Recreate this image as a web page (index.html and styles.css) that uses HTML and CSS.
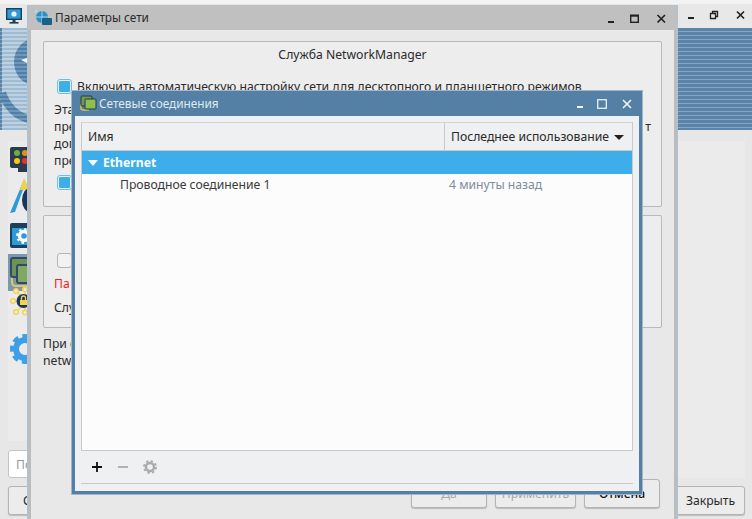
FILE: index.html
```html
<!DOCTYPE html>
<html lang="ru">
<head>
  <meta charset="UTF-8">
  <title>Сетевые соединения</title>
  <link rel="stylesheet" href="styles.css">
</head>
<body>
  <!-- back window -->
  <div class="win back">
    <div class="back-title">
      <svg width="16" height="17" viewBox="0 0 16 17"><rect x="0.700" y="0.700" width="14.600" height="10.600" fill="#2c9bd8" stroke="#1d3f5e" stroke-width="1.400"/><circle cx="8" cy="6" r="2.600" fill="#e8f4fb"/><rect x="6.500" y="11" width="3" height="3" fill="#1d3f5e"/><rect x="3.500" y="14" width="9" height="1.600" fill="#1d3f5e"/></svg>
      <span class="back-letter">П</span>
      <div class="back-btns">
        <svg width="14" height="14" viewBox="0 0 14 14"><rect x="1" y="8" width="6" height="2" fill="#222"/></svg>
        <svg width="14" height="14" viewBox="0 0 14 14"><path d="M3.500 4V2.500h5v5H6.500M1.500 4.500h5v5h-5z" fill="none" stroke="#222" stroke-width="1.300"/></svg>
        <svg width="14" height="14" viewBox="0 0 14 14"><path d="M2 2.500l7 7M9 2.500l-7 7" stroke="#222" stroke-width="1.700"/></svg>
      </div>
    </div>
    <div class="banner">
      <svg class="banner-art" width="28" height="102" viewBox="0 0 28 102">
        <defs>
          <pattern id="stripe" width="4" height="4" patternUnits="userSpaceOnUse"><rect width="4" height="2" fill="#9dbbd3"/><rect y="2" width="4" height="2" fill="#bdd1e1"/></pattern>
          <pattern id="stripe-dark" width="4" height="4" patternUnits="userSpaceOnUse"><rect width="4" height="2" fill="#4f7fa6"/><rect y="2" width="4" height="2" fill="#6f97b8"/></pattern>
        </defs>
        <rect x="2" width="26" height="102" fill="url(#stripe)"/>
        <ellipse cx="34" cy="34" rx="20" ry="23" fill="url(#stripe-dark)"/>
        <path d="M21 32l8-3v7z" fill="#f4f7f9"/>
        <path d="M2 65q8 21 26 26" fill="none" stroke="url(#stripe-dark)" stroke-width="8"/>
      </svg>
    </div>
    <div class="back-main">
      <div class="back-row">
        <div class="back-left-col">
          <div class="side-list">
            <svg class="ico-mon" width="20" height="25" viewBox="0 0 20 25"><rect width="20" height="21" rx="2" fill="#2b3a4c"/><circle cx="7" cy="6" r="3" fill="#6cae45"/><circle cx="15" cy="6" r="3" fill="#ee8a1d"/><circle cx="7" cy="14" r="3" fill="#f5c518"/><circle cx="15" cy="14" r="3" fill="#e3342f"/><rect x="8" y="21" width="12" height="4" fill="#2b3a4c"/></svg>
            <svg class="ico-pen" width="20" height="36" viewBox="0 0 20 36"><path d="M0 35l13-31 2 2-10 28z" fill="#2c9bd8"/><path d="M10 12l4-12 6 12z" fill="#f0d14a"/><ellipse cx="20" cy="22" rx="8" ry="12" fill="#1d3557"/></svg>
            <svg class="ico-cfg" width="20" height="25" viewBox="0 0 20 25"><rect width="20" height="25" rx="2" fill="#1d3f5e"/><rect x="2" y="5" width="18" height="17" fill="#2c9bd8"/><circle cx="14" cy="13" r="4.500" fill="none" stroke="#fff" stroke-width="3.400"/><circle cx="14" cy="13" r="7" fill="none" stroke="#fff" stroke-width="1.800" stroke-dasharray="2.500 3"/></svg>
            <div class="side-active">
              <svg width="20" height="32" viewBox="0 0 20 32"><path d="M2 17v8q0 4 4 4h14" fill="none" stroke="#dcc763" stroke-width="2"/><rect x="1" y="1" width="19" height="19" rx="2" fill="#6f9256" stroke="#2f4b66" stroke-width="2"/><rect x="7" y="8" width="16" height="18" rx="2" fill="#7fa860" stroke="#2f4b66" stroke-width="2"/></svg>
            </div>
            <svg class="ico-lock" width="20" height="28" viewBox="0 0 20 28"><g fill="#ececec" stroke="#f5d34d" stroke-width="1.500"><path d="M3 14h10M6 4l6 6M6 25l6-6M15 3v6M15 25v-6" fill="none"/><circle cx="3" cy="14" r="2.300"/><circle cx="6" cy="4" r="2.300"/><circle cx="6" cy="25" r="2.300"/><circle cx="15" cy="2.500" r="2.300"/><circle cx="15" cy="25.500" r="2.300"/></g><circle cx="13.500" cy="14" r="7" fill="#1d3557"/><rect x="10" y="13" width="7" height="5" fill="#f5d34d"/><path d="M11.500 13v-2a2 2 0 0 1 4 0v2" fill="none" stroke="#f5d34d" stroke-width="1.300"/></svg>
            <svg class="ico-gear" width="20" height="30" viewBox="0 0 20 30"><circle cx="15" cy="15" r="9" fill="none" stroke="#3d9fe6" stroke-width="6"/><circle cx="15" cy="15" r="13" fill="none" stroke="#3d9fe6" stroke-width="4" stroke-dasharray="6 4.200" stroke-dashoffset="3"/></svg>
          </div>
          <div class="back-search">По</div>
        </div>
        <div class="back-panel"></div>
      </div>
      <div class="back-foot">
        <button class="btn back-left" type="button">С</button>
        <button class="btn back-close" type="button">Закрыть</button>
      </div>
    </div>
  </div>

  <!-- network settings window -->
  <div class="win params">
    <div class="params-title">
      <svg width="20" height="20" viewBox="0 0 20 20"><path d="M3 1l.7 1.800 1.800.7-1.800.7-.7 1.800-.7-1.800-1.800-.7 1.800-.7z" fill="#a8dcf2"/><circle cx="9" cy="9" r="6" fill="#2c8fc9"/><path d="M3 9h12M9 3v12" stroke="#bfe3f5" stroke-width=".8"/><rect x="9" y="10" width="10" height="7" rx="1" fill="#1d5f85"/></svg>
      <span class="params-name">Параметры сети</span>
      <div class="params-btns">
        <svg width="14" height="14" viewBox="0 0 14 14"><rect x="1" y="9" width="6" height="2" fill="#222"/></svg>
        <svg width="14" height="14" viewBox="0 0 14 14"><rect x="2.700" y="3.700" width="7.600" height="6.600" fill="none" stroke="#222" stroke-width="1.400"/><rect x="2" y="2.500" width="9" height="2" fill="#222"/></svg>
        <svg class="btn-close" width="14" height="14" viewBox="0 0 14 14"><path d="M2.500 3l7.500 7.500M10 3l-7.500 7.500" stroke="#222" stroke-width="1.700"/></svg>
      </div>
    </div>
    <div class="params-body">
      <div class="frame frame-top">
        <div class="frame-head">Служба NetworkManager</div>
        <div class="check-row">
          <span class="check on"></span>
          <span>Включить автоматическую настройку сети для десктопного и планшетного режимов</span>
        </div>
        <div class="para">
          <div>Эта</div>
          <div class="para-line">пре<span class="para-end">т</span></div>
          <div>дог</div>
          <div>пре</div>
        </div>
        <div class="check-row second"><span class="check on"></span></div>
      </div>
      <div class="frame frame-bottom">
        <div class="check-row third"><span class="check"></span></div>
        <div class="warn">Па</div>
        <div class="svc">Слу</div>
      </div>
      <div class="note">При с<br>netw</div>
      <div class="foot">
        <button class="btn off" type="button">Да</button>
        <button class="btn off apply" type="button">Применить</button>
        <button class="btn cancel" type="button">Отмена</button>
      </div>
    </div>
  </div>

  <!-- connections dialog -->
  <div class="win dialog">
    <div class="dialog-title">
      <svg width="17" height="17" viewBox="0 0 17 17"><path d="M1 9v4q0 2 2 2h6" fill="none" stroke="#d8c25a" stroke-width="1.500"/><rect x="1" y="1" width="11" height="10" rx="1" fill="#6f9a50" stroke="#24384c"/><rect x="5" y="4" width="11" height="10" rx="1" fill="#8fc04f" stroke="#24384c"/></svg>
      <span class="dialog-name">Сетевые соединения</span>
      <div class="dialog-btns">
        <svg width="12" height="12" viewBox="0 0 12 12"><rect x="2" y="8" width="6" height="2" fill="#f4f7f9"/></svg>
        <svg width="12" height="12" viewBox="0 0 12 12"><rect x="1.700" y="1.700" width="8.600" height="8.600" fill="none" stroke="#dce7ef" stroke-width="1.400"/></svg>
        <svg class="btn-close" width="12" height="12" viewBox="0 0 12 12"><path d="M2 2l8 8M10 2l-8 8" stroke="#f4f7f9" stroke-width="1.500"/></svg>
      </div>
    </div>
    <div class="dialog-body">
      <div class="table">
        <div class="thead">
          <div class="th th-name">Имя</div>
          <div class="th th-used">Последнее использование<span class="sort"></span></div>
        </div>
        <div class="group"><span class="arrow"></span>Ethernet</div>
        <div class="row">
          <span class="row-name">Проводное соединение 1</span>
          <span class="row-used">4 минуты назад</span>
        </div>
      </div>
      <div class="tools">
        <svg width="14" height="14" viewBox="0 0 14 14"><path d="M7 2v10M2 7h10" stroke="#111" stroke-width="1.800"/></svg>
        <svg width="14" height="14" viewBox="0 0 14 14"><path d="M2 7h10" stroke="#aaa" stroke-width="1.800"/></svg>
        <svg class="tool-gear" width="14" height="14" viewBox="0 0 14 14"><circle cx="7" cy="7" r="4" fill="none" stroke="#aaa" stroke-width="2.400"/><circle cx="7" cy="7" r="6" fill="none" stroke="#aaa" stroke-width="1.800" stroke-dasharray="2.400 2.300"/></svg>
      </div>
      <div class="dialog-rule"></div>
    </div>
  </div>
</body>
</html>
```

FILE: styles.css
```css
* {
  box-sizing: border-box;
}

html, body {
  margin: 0;
  height: 100%;
}

body {
  position: relative;
  width: 752px;
  height: 519px;
  overflow: hidden;
  background: #f3f3f3;
  font-family: "Noto Sans", sans-serif;
  font-size: 12.2px;
  color: #2a2a2a;
}

.win {
  position: absolute;
}

.btn {
  font: inherit;
  color: inherit;
  background: #ececec;
  border: 1px solid #b4b4b4;
  border-radius: 3px;
  box-shadow: 0 1px 1px #bbb;
  padding: 0;
}

/* back window */
.back {
  left: 0;
  top: 4px;
  width: 752px;
  height: 515px;
  background: #e7e7e7;
  display: flex;
  flex-direction: column;
}

.back-title {
  height: 24px;
  flex: none;
  padding: 0 3px 0 6px;
  background: #e8e8e8;
  display: flex;
  align-items: center;
}

.back-letter {
  margin-left: 5px;
}

.back-btns {
  margin-left: auto;
  display: flex;
  gap: 8px;
}

.back-btns svg:last-child {
  margin-left: 4px;
}

.banner {
  height: 102px;
  flex: none;
  background: repeating-linear-gradient(#5a84a8 0, #5a84a8 3px, #84a6c2 3px, #84a6c2 4px);
}

.banner-art {
  display: block;
}

.back-main {
  flex: 1;
  display: flex;
  flex-direction: column;
  padding: 11px 7px 0 8px;
}

.back-row {
  height: 337px;
  flex: none;
  display: flex;
  justify-content: space-between;
}

.back-left-col {
  width: 60px;
}

.back-panel {
  width: 69px;
  background: #ebebeb;
}

.side-list {
  height: 300px;
  width: 20px;
  padding-top: 6px;
  background: #ebebeb;
  display: flex;
  flex-direction: column;
}

.side-list svg {
  display: block;
  flex: none;
  margin-left: 2px;
  overflow: visible;
}

.side-list .ico-pen {
  margin-top: 6px;
}

.side-list .ico-cfg {
  margin-top: 9px;
}

.side-active {
  width: 20px;
  height: 37px;
  flex: none;
  margin-top: 6px;
  background: #7d98ae;
  padding-top: 3px;
}

.side-list .ico-lock {
  margin-top: -4px;
}

.side-list .ico-gear {
  margin-top: 19px;
}

.back-search {
  margin-top: 9px;
  height: 28px;
  background: #fff;
  border: 1px solid #c4c4c4;
  border-radius: 3px;
  padding: 5px 0 0 7px;
  color: #999;
}

.back-foot {
  margin-top: 8px;
  display: flex;
  justify-content: space-between;
}

.back-left {
  width: 60px;
  height: 29px;
  text-align: left;
  padding-left: 14px;
}

.back-close {
  width: 69px;
  height: 29px;
}

/* network settings window */
.params {
  left: 28px;
  top: 5px;
  width: 649px;
  height: 514px;
  background: #e8e8e8;
  border-left: 3px solid #bcbcbc;
  border-right: 3px solid #bcbcbc;
  box-shadow: -1px 0 0 #a9c3d8, 1px 0 0 #a9c3d8;
}

.params-title {
  height: 25px;
  margin: 0 -3px;
  padding: 0 8.500px 0 5px;
  background: #c0c0c0;
  display: flex;
  align-items: center;
  gap: 2px;
}

.params-name {
  font-size: 11.800px;
  margin-top: -2px;
}

.params-btns {
  margin-left: auto;
  margin-top: 3px;
  display: flex;
  gap: 7px;
}

.params-btns .btn-close {
  margin-left: 5.500px;
}

.params-body {
  padding: 11px 12px 0;
}

.frame {
  background: #ededed;
  border: 1px solid #b9b9b9;
  border-radius: 2px;
  padding: 0 10px;
}

.frame-top {
  height: 166px;
}

.frame-head {
  padding-top: 4px;
  text-align: center;
}

.check-row {
  display: flex;
  align-items: center;
  gap: 5px;
  white-space: nowrap;
  margin-top: 16px;
  height: 15px;
}

.check {
  width: 15px;
  height: 15px;
  flex: none;
  margin-left: 3px;
  background: #f2f2f2;
  border: 1px solid #b4b4b4;
  border-radius: 3px;
}

.check.on {
  padding: 1px;
  background: #3daee9 content-box;
  border: 1px solid #6bbdea;
}

.para {
  margin-top: 7px;
  line-height: 17px;
}

.para-line {
  position: relative;
}

.para-end {
  position: absolute;
  right: 0;
}

.check-row.second {
  margin-top: 6px;
}

.frame-bottom {
  margin-top: 8px;
  height: 113px;
}

.check-row.third {
  margin-top: 37px;
}

.warn {
  margin-top: 7px;
  color: #f01e1e;
}

.svc {
  margin-top: 7px;
}

.note {
  margin-top: 7px;
  line-height: 17px;
}

.foot {
  margin-top: 110px;
  padding-right: 2px;
  display: flex;
  justify-content: flex-end;
  gap: 8px;
}

.foot .btn {
  height: 29px;
  width: 76px;
}

.foot .apply {
  width: 81px;
}

.btn.off {
  color: #aaa;
}

.cancel {
  font-weight: 500;
  color: #111;
}

/* connections dialog */
.dialog {
  left: 72px;
  top: 91px;
  width: 570px;
  height: 403px;
  background: #eff0f1;
  border: 3px solid #5580a5;
  border-top: 0;
  display: flex;
  flex-direction: column;
  box-shadow: 0 0 0 1px #9fb7cb;
}

.dialog-title {
  height: 25px;
  flex: none;
  background: #5580a5;
  color: #dfe9f0;
  padding: 0 6px 0 5px;
  display: flex;
  align-items: center;
  gap: 2px;
}

.dialog-name {
  font-size: 11.800px;
  margin-top: -2px;
}

.dialog-btns {
  margin-left: auto;
  display: flex;
  gap: 9px;
}

.dialog-btns .btn-close {
  margin-left: 4px;
}

.dialog-body {
  flex: 1;
  padding: 6px 6px 4px;
  display: flex;
  flex-direction: column;
}

.table {
  height: 329px;
  flex: none;
  background: #fcfcfc;
  border: 1px solid #c8c9ca;
  border-top-color: #d4d5d6;
}

.thead {
  display: flex;
  height: 28px;
  background: #eff0f1;
  border-bottom: 1px solid #c8c9ca;
}

.th {
  line-height: 28px;
  padding-left: 6px;
}

.th-name {
  width: 363px;
  border-right: 1px solid #c8c9ca;
}

.th-used {
  flex: 1;
  white-space: nowrap;
}

.sort {
  display: inline-block;
  margin-left: 5px;
  vertical-align: 1px;
  border-left: 5px solid transparent;
  border-right: 5px solid transparent;
  border-top: 5px solid #222;
}

.group {
  height: 23px;
  background: #3daee9;
  color: #fcfcfc;
  font-weight: 700;
  padding-left: 6px;
  display: flex;
  align-items: center;
}

.arrow {
  margin-right: 5px;
  border-left: 5px solid transparent;
  border-right: 5px solid transparent;
  border-top: 6px solid #fcfcfc;
}

.row {
  display: flex;
  height: 23px;
  line-height: 22px;
}

.row-name {
  width: 367px;
  padding-left: 38px;
  color: #3a3a3a;
}

.row-used {
  color: #7f8c9b;
}

.tools {
  height: 32px;
  flex: none;
  padding-left: 9px;
  display: flex;
  align-items: center;
  gap: 12px;
}

.tool-gear {
  margin-left: 1px;
}

.dialog-rule {
  height: 1px;
  background: #c8c9ca;
}
```
